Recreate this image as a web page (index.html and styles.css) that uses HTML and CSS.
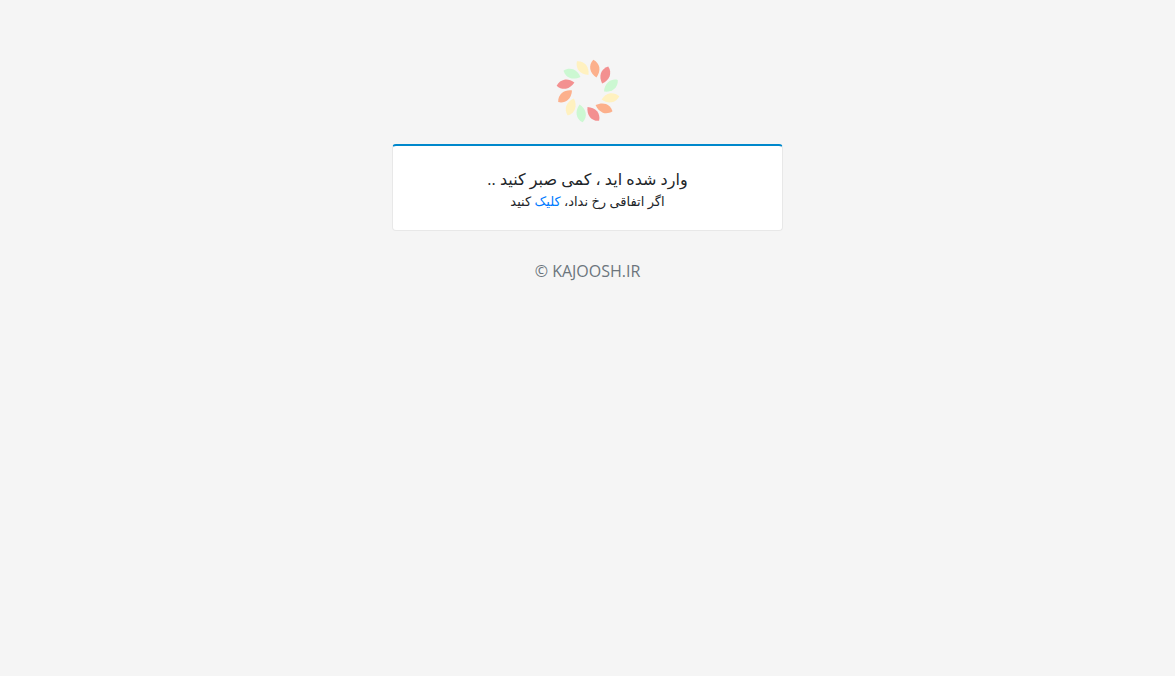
FILE: index.html
```
<!DOCTYPE html>
<html lang="fa" dir="rtl">
<head>
<meta charset="utf-8">
<meta name="viewport" content="width=device-width, initial-scale=1">
<title>KAJOOSH.IR</title>
<link rel="stylesheet" href="styles.css">
</head>
<body>
<main class="page">
  <svg class="logo" viewBox="-32 -32 64 64" aria-hidden="true">
    <defs>
      <path id="leaf" d="M0 -9C3.2 -6.8 4.6 -3.2 4.6 -.4C4.6 3 2.8 6.4 0 9C-2.8 6.4 -4.6 3 -4.6 -.4C-4.6 -3.2 -3.2 -6.8 0 -9Z"/>
      <g id="petals">
        <use href="#leaf" class="orange" transform="rotate(17) translate(0 -23.5) rotate(-27)"/>
        <use href="#leaf" class="red" transform="rotate(47) translate(0 -23.5) rotate(-27)"/>
        <use href="#leaf" class="green" transform="rotate(77) translate(0 -23.5) rotate(-27)"/>
        <use href="#leaf" class="yellow" transform="rotate(107) translate(0 -23.5) rotate(-27)"/>
      </g>
    </defs>
    <use href="#petals"/>
    <use href="#petals" transform="rotate(120)"/>
    <use href="#petals" transform="rotate(240)"/>
  </svg>
  <section class="card">
    <h1 class="title">وارد شده اید ، کمی صبر کنید ..</h1>
    <p class="hint">اگر اتفاقی رخ نداد، <a class="link" href="#">کلیک</a> کنید</p>
  </section>
  <footer class="footer" dir="ltr">© KAJOOSH.IR</footer>
</main>
</body>
</html>
```
FILE: styles.css
```
* {
  box-sizing: border-box;
}

body {
  margin: 0;
  background: #f5f5f5;
  color: #212529;
  font-family: "Segoe UI", "Open Sans", "DejaVu Sans", sans-serif;
}

.page {
  display: flex;
  flex-direction: column;
  align-items: center;
  padding: 59px 16px 0;
}

.logo {
  width: 64px;
  height: 64px;
}

.orange { fill: #fcb08c; }
.red { fill: #f39090; }
.green { fill: #ccf8d2; }
.yellow { fill: #fff1c0; }

.card {
  width: 100%;
  max-width: 391px;
  margin-top: 21px;
  padding: 22px 20px 18px;
  background: #fff;
  border: 1px solid #e8e8e8;
  border-top: 2px solid #0088cc;
  border-radius: 4px;
  text-align: center;
}

.title {
  margin: 0;
  font-size: 16px;
  font-weight: 400;
  line-height: 22px;
}

.hint {
  margin: 0;
  font-size: 13px;
  line-height: 22px;
}

.link {
  color: #007bff;
  text-decoration: none;
}

.footer {
  margin-top: 28px;
  color: #6c757d;
  font-size: 16px;
  line-height: 24px;
}
```
